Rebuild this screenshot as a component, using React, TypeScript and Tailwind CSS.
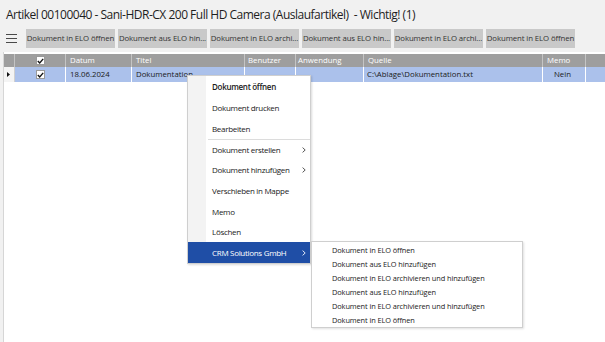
import React from "react";

const font = { fontFamily: '"Open Sans", "Noto Sans", Arial, sans-serif' };

function Check() {
  return (
    <div className="w-[9px] h-[9px] bg-white border border-[#9a9a9a] flex items-center justify-center">
      <svg width="7" height="6" viewBox="0 0 7 6">
        <path d="M0.8 3 L2.7 4.9 L6.2 0.9" fill="none" stroke="#111" strokeWidth="1.4" />
      </svg>
    </div>
  );
}

const toolbarButtons = [
  "Dokument in ELO öffnen",
  "Dokument aus ELO hin...",
  "Dokument in ELO archi...",
  "Dokument aus ELO hin...",
  "Dokument in ELO archi...",
  "Dokument in ELO öffnen",
];

const menuItems: { label: string; h: string; bold?: boolean; sub?: boolean; sepBefore?: boolean; active?: boolean }[] = [
  { label: "Dokument öffnen", h: "h-[21px]", bold: true },
  { label: "Dokument drucken", h: "h-[21px]" },
  { label: "Bearbeiten", h: "h-[21px]" },
  { label: "Dokument erstellen", h: "h-[20px]", sub: true, sepBefore: true },
  { label: "Dokument hinzufügen", h: "h-[20px]", sub: true },
  { label: "Verschieben in Mappe", h: "h-[21px]" },
  { label: "Memo", h: "h-[21px]" },
  { label: "Löschen", h: "h-[20px]" },
  { label: "CRM Solutions GmbH", h: "h-[21px]", sub: true, active: true },
];

const subItems = [
  "Dokument in ELO öffnen",
  "Dokument aus ELO hinzufügen",
  "Dokument in ELO archivieren und hinzufügen",
  "Dokument aus ELO hinzufügen",
  "Dokument in ELO archivieren und hinzufügen",
  "Dokument in ELO öffnen",
];

function Chevron({ color }: { color: string }) {
  return (
    <svg width="4" height="6" viewBox="0 0 4 6">
      <path d="M0.6 0.6 L3.2 3 L0.6 5.4" fill="none" stroke={color} strokeWidth="1" />
    </svg>
  );
}

export default function App() {
  return (
    <div className="w-[605px] h-[342px] bg-[#f1f1f1] relative overflow-hidden flex flex-col" style={font}>
      {/* Title */}
      <div className="h-[29px] flex items-center pl-[6px] pt-[1px] text-[12px] text-[#1e1e1e] whitespace-pre tracking-[-0.5px]">
        Artikel 00100040 - Sani-HDR-CX 200 Full HD Camera (Auslaufartikel)  - Wichtig! (1)
      </div>
      {/* Toolbar */}
      <div className="h-[19px] flex items-center">
        <div className="w-[26px] h-full flex items-center pl-[6px]">
          <div className="flex flex-col gap-[2.5px]">
            <div className="w-[11px] h-[1.5px] bg-[#4a4a4a]" />
            <div className="w-[11px] h-[1.5px] bg-[#4a4a4a]" />
            <div className="w-[11px] h-[1.5px] bg-[#4a4a4a]" />
          </div>
        </div>
        <div className="flex gap-[3px] h-full">
          {toolbarButtons.map((b, i) => (
            <div
              key={i}
              className="w-[89px] h-full bg-[#c9c9c9] flex items-center justify-center text-[7.8px] text-[#333] whitespace-nowrap tracking-[-0.1px]"
            >
              {b}
            </div>
          ))}
        </div>
      </div>
      {/* Content area */}
      <div className="flex-1 mt-[4px] ml-[3px] bg-white border-l border-[#d6d6d6] pt-[2px]">
        {/* Header row */}
        <div className="flex h-[13px] bg-[#9e9e9e] text-white text-[7.8px] items-center">
          <div className="w-[11px] h-full border-r border-[#c4c4c4]" />
          <div className="w-[51px] h-full border-r border-[#c4c4c4] flex items-center justify-center">
            <Check />
          </div>
          <div className="w-[66px] h-full border-r border-[#c4c4c4] pl-[4px] flex items-center">Datum</div>
          <div className="w-[113px] h-full border-r border-[#c4c4c4] pl-[4px] flex items-center">Titel</div>
          <div className="w-[51px] h-full border-r border-[#c4c4c4] pl-[3px] flex items-center">Benutzer</div>
          <div className="w-[68px] h-full border-r border-[#c4c4c4] pl-[2px] flex items-center">Anwendung</div>
          <div className="w-[179px] h-full border-r border-[#c4c4c4] pl-[4px] flex items-center">Quelle</div>
          <div className="w-[43px] h-full border-r border-[#c4c4c4] pl-[4px] flex items-center">Memo</div>
          <div className="flex-1 h-full" />
        </div>
        {/* Data row */}
        <div className="flex h-[15px] bg-[#abc1eb] text-[#1a1a1a] text-[7.8px] items-center">
          <div className="w-[11px] h-full bg-[#f4f4f4] border-r border-[#d0d0d0] flex items-center pl-[3px]">
            <svg width="3" height="5" viewBox="0 0 3 5">
              <path d="M0 0 L3 2.5 L0 5 Z" fill="#111" />
            </svg>
          </div>
          <div className="w-[51px] h-full border-r border-white flex items-center justify-center">
            <Check />
          </div>
          <div className="w-[66px] h-full border-r border-white pl-[4px] flex items-center">18.06.2024</div>
          <div className="w-[113px] h-full border-r border-white pl-[4px] flex items-center">Dokumentation</div>
          <div className="w-[51px] h-full border-r border-white" />
          <div className="w-[68px] h-full border-r border-white" />
          <div className="w-[179px] h-full border-r border-white pl-[3px] flex items-center">C:\Ablage\Dokumentation.txt</div>
          <div className="w-[43px] h-full border-r border-white flex items-center pl-[11px]">Nein</div>
          <div className="flex-1 h-full" />
        </div>
      </div>

      {/* Context menu */}
      <div className="absolute left-[187px] top-[75px] w-[124px] bg-white border border-[#cfcfcf] shadow-[1px_1px_2px_rgba(0,0,0,0.15)]">
        <div className="absolute left-0 top-0 bottom-0 w-[18px] bg-[#f3f3f3]" />
        {menuItems.map((m, i) => (
          <React.Fragment key={i}>
            {m.sepBefore && <div className="relative h-[1px] ml-[20px] bg-[#dcdcdc]" />}
            <div
              className={`relative ${m.h} flex items-center pl-[24px] pr-[4px] text-[8px] tracking-[-0.3px] whitespace-nowrap ${
                m.active ? "bg-[#1f4ea6] text-white" : "text-[#1a1a1a]"
              } ${m.bold ? "font-semibold" : ""}`}
            >
              <span className="flex-1">{m.label}</span>
              {m.sub && <Chevron color={m.active ? "#dfe6f5" : "#555"} />}
            </div>
          </React.Fragment>
        ))}
      </div>

      {/* Submenu */}
      <div className="absolute left-[311px] top-[241px] w-[212px] h-[87px] bg-white border border-[#cfcfcf] pt-[2px] shadow-[1px_1px_2px_rgba(0,0,0,0.12)]">
        {subItems.map((s, i) => (
          <div key={i} className="h-[14px] flex items-center pl-[20px] text-[7.4px] tracking-[-0.1px] text-[#1a1a1a] whitespace-nowrap">
            {s}
          </div>
        ))}
      </div>
    </div>
  );
}
